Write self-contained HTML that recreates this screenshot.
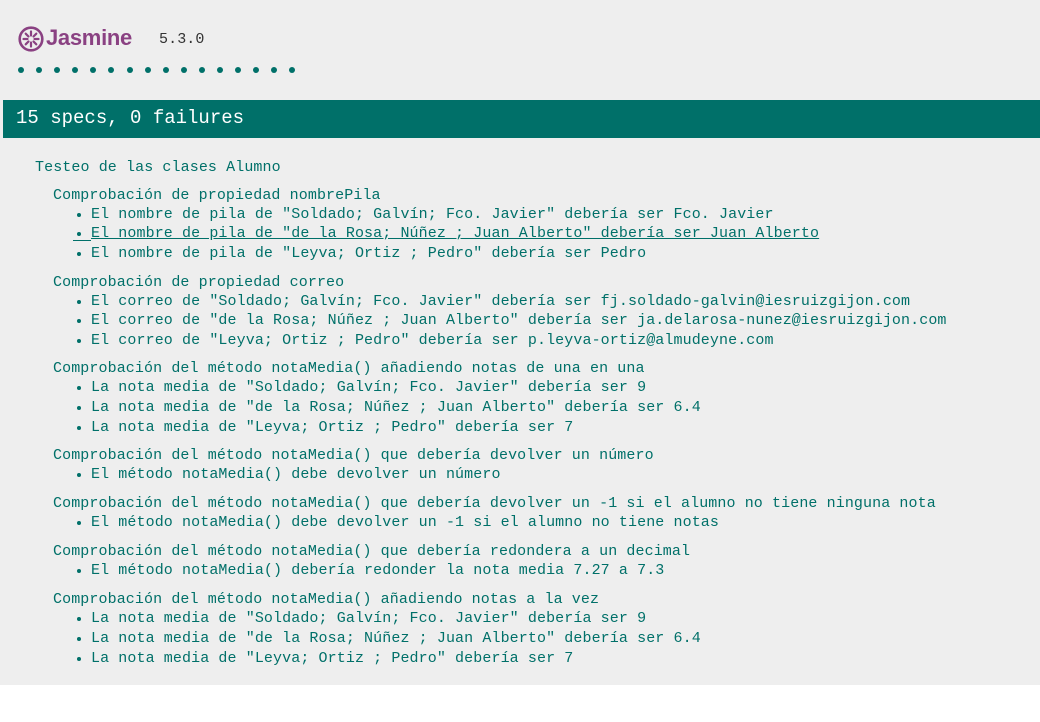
<!DOCTYPE html>
<html><head><meta charset="utf-8"><style>
html,body{margin:0;padding:0;background:#fff;width:1040px;height:722px;overflow:hidden}
#bg{position:absolute;left:0;top:0;width:1040px;height:685px;background:#eee}
.t{position:absolute;font-family:"Liberation Mono",monospace;font-size:15px;letter-spacing:0.1px;color:#007069;white-space:pre;line-height:18px;margin-top:1px}
.b::before{content:"";position:absolute;left:-14px;top:7px;width:4px;height:4px;border-radius:50%;background:#007069}
#bar{position:absolute;left:3px;top:100px;width:1037px;height:38px;background:#007069}
#bar span{position:absolute;left:13px;top:7px;font-family:"Liberation Mono",monospace;font-size:19px;color:#fff;white-space:pre}
.dot{position:absolute;top:67px;width:6px;height:6px;border-radius:50%;background:#007069}
</style></head><body>
<div id="bg"></div>
<svg style="position:absolute;left:18px;top:26px" width="26" height="26" viewBox="0 0 26 26">
<circle cx="13" cy="13" r="11.3" fill="none" stroke="#8a4182" stroke-width="2.6"/>
<g stroke="#8a4182" stroke-width="2.2" stroke-linecap="round">
<line x1="13" y1="5.5" x2="13" y2="9.5"/><line x1="13" y1="16.5" x2="13" y2="20.5"/>
<line x1="5.5" y1="13" x2="9.5" y2="13"/><line x1="16.5" y1="13" x2="20.5" y2="13"/>
<line x1="7.7" y1="7.7" x2="10.5" y2="10.5"/><line x1="15.5" y1="15.5" x2="18.3" y2="18.3"/>
<line x1="18.3" y1="7.7" x2="15.5" y2="10.5"/><line x1="10.5" y1="15.5" x2="7.7" y2="18.3"/>
</g></svg>
<div style="position:absolute;left:46px;top:25px;font-family:'Liberation Sans',sans-serif;font-weight:bold;font-size:22px;color:#8a4182;letter-spacing:-0.3px">Jasmine</div>
<div class="t" style="left:159px;top:30px;color:#333">5.3.0</div>
<div id="bar"><span>15 specs, 0 failures</span></div>
<div class="t" style="left:35px;top:158px">Testeo de las clases Alumno</div>
<div class="t" style="left:53px;top:186px">Comprobación de propiedad nombrePila</div>
<div class="t b" style="left:91px;top:205px">El nombre de pila de "Soldado; Galvín; Fco. Javier" debería ser Fco. Javier</div>
<div class="t b" style="left:91px;top:224px;text-decoration:underline">El nombre de pila de "de la Rosa; Núñez ; Juan Alberto" debería ser Juan Alberto</div>
<div style="position:absolute;left:73px;top:240px;width:18px;height:1px;background:#007069"></div>
<div class="t b" style="left:91px;top:244px">El nombre de pila de "Leyva; Ortiz ; Pedro" debería ser Pedro</div>
<div class="t" style="left:53px;top:273px">Comprobación de propiedad correo</div>
<div class="t b" style="left:91px;top:292px">El correo de "Soldado; Galvín; Fco. Javier" debería ser fj.soldado-galvin@iesruizgijon.com</div>
<div class="t b" style="left:91px;top:311px">El correo de "de la Rosa; Núñez ; Juan Alberto" debería ser ja.delarosa-nunez@iesruizgijon.com</div>
<div class="t b" style="left:91px;top:331px">El correo de "Leyva; Ortiz ; Pedro" debería ser p.leyva-ortiz@almudeyne.com</div>
<div class="t" style="left:53px;top:359px">Comprobación del método notaMedia() añadiendo notas de una en una</div>
<div class="t b" style="left:91px;top:378px">La nota media de "Soldado; Galvín; Fco. Javier" debería ser 9</div>
<div class="t b" style="left:91px;top:398px">La nota media de "de la Rosa; Núñez ; Juan Alberto" debería ser 6.4</div>
<div class="t b" style="left:91px;top:418px">La nota media de "Leyva; Ortiz ; Pedro" debería ser 7</div>
<div class="t" style="left:53px;top:446px">Comprobación del método notaMedia() que debería devolver un número</div>
<div class="t b" style="left:91px;top:465px">El método notaMedia() debe devolver un número</div>
<div class="t" style="left:53px;top:494px">Comprobación del método notaMedia() que debería devolver un -1 si el alumno no tiene ninguna nota</div>
<div class="t b" style="left:91px;top:513px">El método notaMedia() debe devolver un -1 si el alumno no tiene notas</div>
<div class="t" style="left:53px;top:542px">Comprobación del método notaMedia() que debería redondera a un decimal</div>
<div class="t b" style="left:91px;top:561px">El método notaMedia() debería redonder la nota media 7.27 a 7.3</div>
<div class="t" style="left:53px;top:590px">Comprobación del método notaMedia() añadiendo notas a la vez</div>
<div class="t b" style="left:91px;top:609px">La nota media de "Soldado; Galvín; Fco. Javier" debería ser 9</div>
<div class="t b" style="left:91px;top:629px">La nota media de "de la Rosa; Núñez ; Juan Alberto" debería ser 6.4</div>
<div class="t b" style="left:91px;top:649px">La nota media de "Leyva; Ortiz ; Pedro" debería ser 7</div>
<div class="dot" style="left:18px"></div><div class="dot" style="left:36px"></div><div class="dot" style="left:54px"></div><div class="dot" style="left:72px"></div>
<div class="dot" style="left:90px"></div><div class="dot" style="left:108px"></div><div class="dot" style="left:127px"></div><div class="dot" style="left:145px"></div>
<div class="dot" style="left:163px"></div><div class="dot" style="left:181px"></div><div class="dot" style="left:199px"></div><div class="dot" style="left:217px"></div>
<div class="dot" style="left:235px"></div><div class="dot" style="left:253px"></div><div class="dot" style="left:271px"></div><div class="dot" style="left:289px"></div>
</body></html>
